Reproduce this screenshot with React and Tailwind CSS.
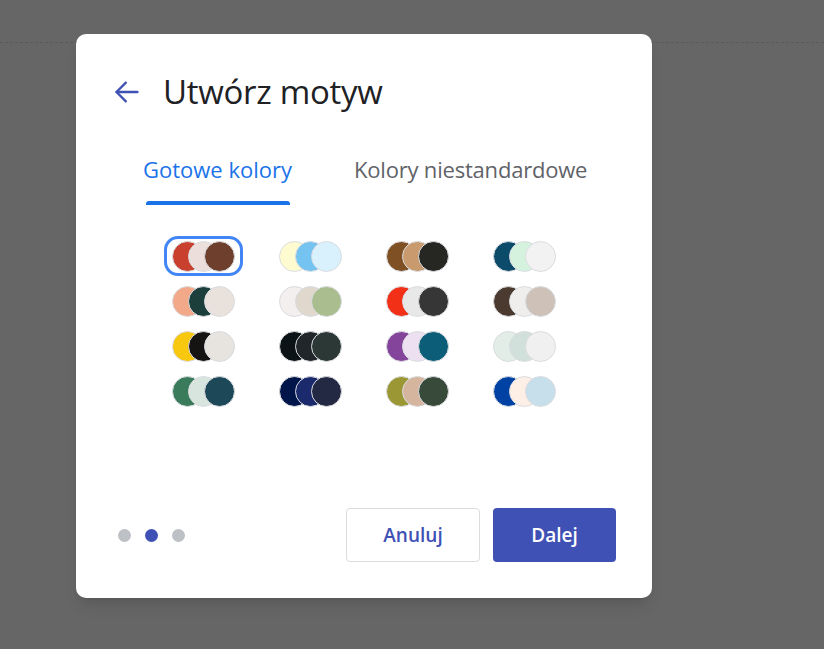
import React, { useState } from "react";

const palettes = [
  ["#c9412e", "#ecdfdb", "#6f3f2d"],
  ["#fefbd1", "#74c3f0", "#d9f0fd"],
  ["#7f5024", "#c89a6e", "#262622"],
  ["#0d4b6b", "#d5f2df", "#f2f2f2"],
  ["#f2a98a", "#1c3f3b", "#e9e1dc"],
  ["#f2efee", "#e1d8cd", "#a9bd8f"],
  ["#f22f17", "#e8e8e8", "#363636"],
  ["#4b3a2f", "#efeeec", "#cdc1b8"],
  ["#f8c80f", "#161412", "#e7e4df"],
  ["#0b1316", "#20262a", "#2b3835"],
  ["#85449b", "#ece0f1", "#0b5d78"],
  ["#e3ede8", "#d2e0db", "#f0f0f0"],
  ["#397b5a", "#d7e5de", "#1d4858"],
  ["#00164a", "#1b2a6c", "#232843"],
  ["#9b9734", "#d6b59e", "#384a39"],
  ["#0042a3", "#fdeee6", "#c7dfea"],
];

const Swatch = ({ colors, selected, onClick }) => (
  <button
    onClick={onClick}
    className={
      "flex items-center justify-center h-[40px] w-[79px] rounded-[14px] border-[3px] " +
      (selected ? "border-[#4285f4]" : "border-transparent")
    }
  >
    {colors.map((c, i) => (
      <span
        key={i}
        className={"block w-[31px] h-[31px] rounded-full border border-[#dadce0] shrink-0 " + (i > 0 ? "-ml-[15px]" : "")}
        style={{ backgroundColor: c }}
      />
    ))}
  </button>
);

export default function App() {
  const [selected, setSelected] = useState(0);
  const [tab, setTab] = useState(0);

  return (
    <div className="relative h-[649px] w-full bg-[#666666] overflow-hidden" style={{ fontFamily: "'Open Sans', Roboto, sans-serif" }}>
      <div className="pt-[42px]">
        <div className="border-t border-dashed border-[#5a5a5a]" />
      </div>

      {/* Modal */}
      <div className="absolute left-[76px] top-[34px] w-[576px] h-[564px] bg-white rounded-[10px] shadow-lg flex flex-col">
        <div className="flex items-center mt-[38px] ml-[37px] h-[40px]">
          <button className="w-[28px] h-[28px] flex items-center justify-center text-[#3f51b5]">
            <svg width="28" height="28" viewBox="0 0 24 24" fill="none" stroke="currentColor" strokeWidth="2" strokeLinecap="round" strokeLinejoin="round">
              <path d="M21 12H3" />
              <path d="M11 4l-8 8 8 8" />
            </svg>
          </button>
          <h1 className="ml-[22px] text-[33px] leading-[40px] text-[#202124] font-normal tracking-[-0.3px]">Utwórz motyw</h1>
        </div>

        <div className="flex pl-[67px] mt-[23px]">
          <button onClick={() => setTab(0)} className="flex flex-col items-center">
            <span className={"text-[22px] leading-[24px] mt-[22px] whitespace-nowrap " + (tab === 0 ? "text-[#1a73e8]" : "text-[#5f6368]")}>Gotowe kolory</span>
            <span className={"block mt-[20px] h-[4px] w-[144px] rounded-t-[3px] " + (tab === 0 ? "bg-[#1a73e8]" : "bg-transparent")} />
          </button>
          <button onClick={() => setTab(1)} className="flex flex-col items-center ml-[62px]">
            <span className={"text-[22px] leading-[24px] mt-[22px] whitespace-nowrap tracking-[-0.2px] " + (tab === 1 ? "text-[#1a73e8]" : "text-[#5f6368]")}>Kolory niestandardowe</span>
            <span className={"block mt-[20px] h-[4px] w-[228px] rounded-t-[3px] " + (tab === 1 ? "bg-[#1a73e8]" : "bg-transparent")} />
          </button>
        </div>

        <div className="grid grid-cols-4 w-[428px] mx-auto mt-[31px] gap-y-[5px]">
          {palettes.map((p, i) => (
            <div key={i} className="flex justify-center">
              <Swatch colors={p} selected={selected === i} onClick={() => setSelected(i)} />
            </div>
          ))}
        </div>

        <div className="mt-auto flex items-center justify-between pl-[42px] pr-[36px] pb-[36px]">
          <div className="flex gap-[14px]">
            <span className="w-[13px] h-[13px] rounded-full bg-[#bdc1c6]" />
            <span className="w-[13px] h-[13px] rounded-full bg-[#3f51b5]" />
            <span className="w-[13px] h-[13px] rounded-full bg-[#bdc1c6]" />
          </div>
          <div className="flex gap-[13px]">
            <button className="w-[134px] h-[54px] rounded-[4px] border border-[#dadce0] text-[#3f51b5] text-[19px] font-semibold">Anuluj</button>
            <button className="w-[123px] h-[54px] rounded-[4px] bg-[#3f51b5] text-white text-[19px] font-semibold">Dalej</button>
          </div>
        </div>
      </div>
    </div>
  );
}
